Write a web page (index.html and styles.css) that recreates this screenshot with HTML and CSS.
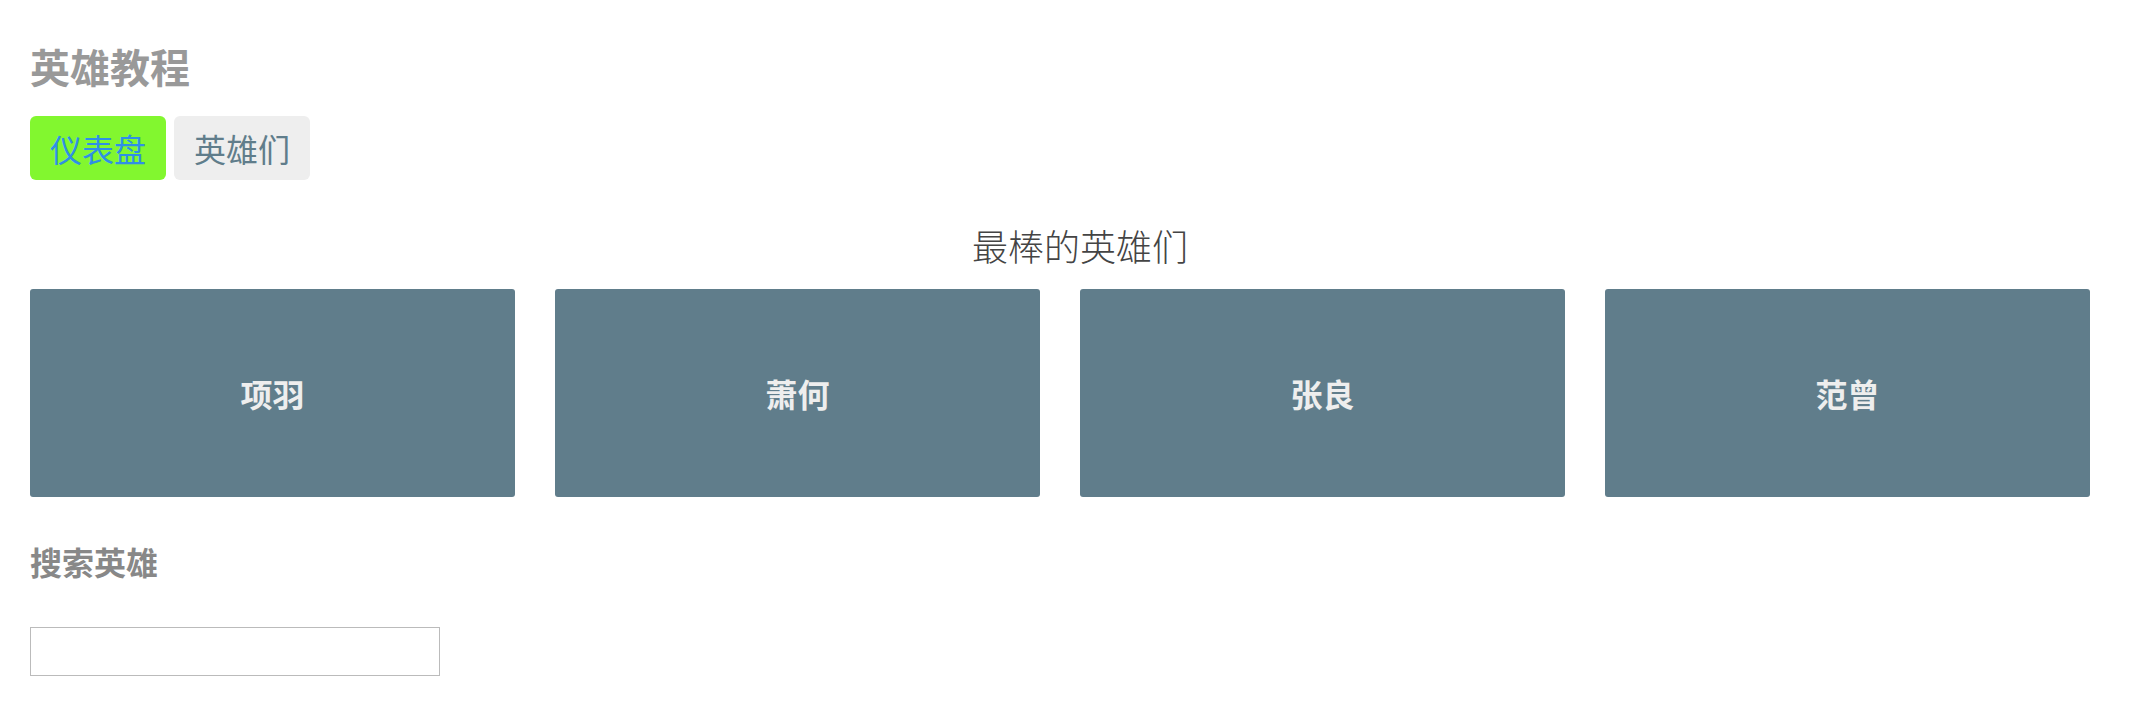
FILE: index.html
```html
<!DOCTYPE html>
<html lang="zh-CN">
<head>
<meta charset="utf-8">
<title>英雄教程</title>
<link rel="stylesheet" href="styles.css">
</head>
<body>
<div class="app">
  <h1 class="title">英雄教程</h1>
  <nav class="nav">
    <a class="nav-link active">仪表盘</a>
    <a class="nav-link">英雄们</a>
  </nav>
  <h3 class="top-heading">最棒的英雄们</h3>
  <div class="grid">
    <div class="col"><div class="hero-card">项羽</div></div>
    <div class="col"><div class="hero-card">萧何</div></div>
    <div class="col"><div class="hero-card">张良</div></div>
    <div class="col"><div class="hero-card">范曾</div></div>
  </div>
  <h4 class="search-heading">搜索英雄</h4>
  <input class="search-box" type="text">
</div>
</body>
</html>
```
FILE: styles.css
```css
html, body {
  margin: 0;
  padding: 0;
  background: #fff;
}
body {
  font-family: "Noto Sans CJK SC", "Noto Sans", sans-serif;
}
.app {
  padding-left: 30px;
  display: flex;
  flex-direction: column;
  align-items: flex-start;
}
.title {
  margin: 42px 0 0 0;
  font-size: 40px;
  line-height: 48px;
  font-weight: 700;
  color: #999;
}
.nav {
  margin-top: 26px;
  display: flex;
  gap: 8px;
}
.nav-link {
  display: block;
  font-size: 32px;
  line-height: 44px;
  padding: 10px 20px;
  border-radius: 6px;
  background: #eee;
  color: #607d8b;
  text-decoration: none;
}
.nav-link.active {
  background: #82f72f;
  color: #2f8fe6;
}
.top-heading {
  align-self: stretch;
  margin: 43px 0 0 0;
  text-align: center;
  font-size: 36px;
  line-height: 44px;
  font-weight: 300;
  color: #444;
}
.grid {
  align-self: stretch;
  margin-top: 22px;
  display: flex;
}
.col {
  width: 25%;
  padding-right: 40px;
  box-sizing: border-box;
}
.hero-card {
  height: 208px;
  border-radius: 3px;
  background: #607d8b;
  color: #eee;
  font-size: 32px;
  font-weight: 700;
  display: flex;
  align-items: center;
  justify-content: center;
}
.search-heading {
  margin: 44px 0 0 0;
  font-size: 32px;
  line-height: 40px;
  font-weight: 700;
  color: #888;
}
.search-box {
  margin-top: 46px;
  width: 410px;
  height: 49px;
  box-sizing: border-box;
  border: 1px solid #bbb;
  border-radius: 0;
  padding: 0 8px;
  font-size: 24px;
  outline: none;
}
```
